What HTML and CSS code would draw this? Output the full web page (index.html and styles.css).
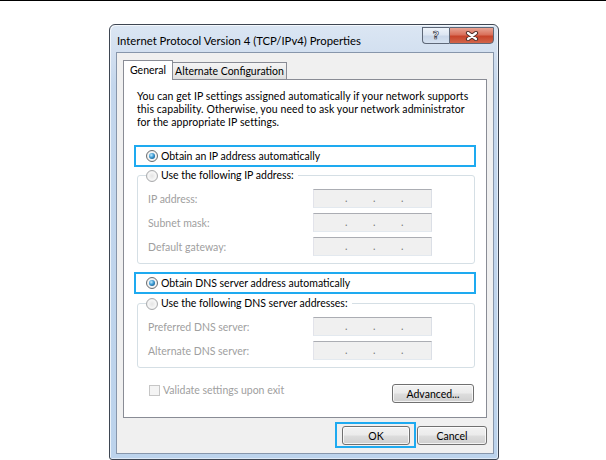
FILE: index.html
```html
<!DOCTYPE html>
<html>
<head>
<meta charset="utf-8">
<link rel="stylesheet" href="styles.css">
</head>
<body>
<div class="topline"></div>
<div class="window">
  <div class="titlebar">
    <div class="title">Internet Protocol Version 4 (TCP/IPv4) Properties</div>
    <div class="caption-btns">
      <div class="cbtn help">?</div>
      <div class="cbtn close">
        <svg width="14" height="10" viewBox="0 0 14 10">
          <path d="M3 2 L11 8 M11 2 L3 8" stroke="#51302a" stroke-width="4.2" stroke-linecap="round" fill="none"/>
          <path d="M3 2 L11 8 M11 2 L3 8" stroke="#ffffff" stroke-width="2.2" stroke-linecap="round" fill="none"/>
        </svg>
      </div>
    </div>
  </div>
  <div class="client">
    <div class="tabs">
      <div class="tab active">General</div>
      <div class="tab alt">Alternate Configuration</div>
    </div>
    <div class="panel">
      <p class="intro">You can get IP settings assigned automatically if your network supports<br>this capability. Otherwise, you need to ask your network administrator<br>for the appropriate IP settings.</p>
      <div class="hl option first"><span class="radio on"></span><span>Obtain an IP address automatically</span></div>
      <fieldset class="group g1">
        <legend><span class="radio"></span><span>Use the following IP address:</span></legend>
        <div class="rows">
          <span class="lbl">IP address:</span><span class="ip"><i>.</i><i>.</i><i>.</i></span>
          <span class="lbl">Subnet mask:</span><span class="ip"><i>.</i><i>.</i><i>.</i></span>
          <span class="lbl">Default gateway:</span><span class="ip"><i>.</i><i>.</i><i>.</i></span>
        </div>
      </fieldset>
      <div class="hl option second"><span class="radio on"></span><span>Obtain DNS server address automatically</span></div>
      <fieldset class="group g2">
        <legend><span class="radio"></span><span>Use the following DNS server addresses:</span></legend>
        <div class="rows">
          <span class="lbl">Preferred DNS server:</span><span class="ip"><i>.</i><i>.</i><i>.</i></span>
          <span class="lbl">Alternate DNS server:</span><span class="ip"><i>.</i><i>.</i><i>.</i></span>
        </div>
      </fieldset>
      <div class="foot">
        <div class="check"><span class="box"></span><span>Validate settings upon exit</span></div>
        <div class="btn adv">Advanced...</div>
      </div>
    </div>
    <div class="actions">
      <div class="hl okwrap"><div class="btn ok">OK</div></div>
      <div class="btn cancel">Cancel</div>
    </div>
  </div>
</div>
</body>
</html>
```

FILE: styles.css
```css
html, body {
  margin: 0;
  padding: 0;
  background: #ffffff;
}

body {
  font-family: Lato, "Open Sans", sans-serif;
  font-size: 10.5px;
  color: #000000;
}

.topline {
  height: 1px;
  background: #000000;
}

.window {
  margin: 23px 0 0 109px;
  width: 390px;
  height: 436px;
  box-sizing: border-box;
  border: 1px solid #3e4652;
  border-radius: 6px 6px 3px 3px;
  background: linear-gradient(180deg, #dbe6f3 0px, #d3e0f0 26px, #c4d7ed 60px, #bcd3ec 100%);
  box-shadow: inset 1px 1px 0 rgba(255, 255, 255, 0.7), inset -1px -1px 0 rgba(255, 255, 255, 0.5);
  display: flex;
  flex-direction: column;
}

.titlebar {
  flex: none;
  height: 27px;
  display: flex;
  justify-content: space-between;
  align-items: flex-start;
}

.title {
  padding: 9px 0 0 7px;
  line-height: 13px;
  font-size: 11.3px;
  color: #000000;
}

.caption-btns {
  display: flex;
  margin: 2px 4px 0 0;
  height: 17px;
}

.cbtn {
  box-sizing: border-box;
  height: 17px;
  display: flex;
  align-items: center;
  justify-content: center;
  border: 1px solid #5e6878;
}

.help {
  width: 27px;
  border-right: none;
  border-radius: 0 0 0 4px;
  background: linear-gradient(180deg, #eef3fa 0%, #dde6f2 45%, #c9d6e8 55%, #d6e2f1 100%);
  font-family: "DejaVu Sans", sans-serif;
  font-weight: bold;
  font-size: 11px;
  color: #ffffff;
  -webkit-text-stroke: 0.7px #3b4350;
  line-height: 1;
}

.close {
  width: 45px;
  border-radius: 0 0 4px 0;
  background: linear-gradient(180deg, #e8a393 0%, #d9705b 45%, #c7432a 55%, #d2654a 100%);
}

.client {
  flex: 1;
  min-height: 0;
  margin: 0 4px 5px 6px;
  border: 1px solid #8796ab;
  background: #f0f0f0;
  padding: 7px 6px 5px 6px;
  display: flex;
  flex-direction: column;
}

.tabs {
  flex: none;
  height: 20px;
  margin-bottom: -1px;
  display: flex;
  align-items: flex-end;
  position: relative;
  z-index: 1;
}

.tab {
  box-sizing: border-box;
  border: 1px solid #898c95;
  border-bottom: none;
  text-align: center;
  white-space: nowrap;
}

.tab.active {
  width: 50px;
  height: 20px;
  line-height: 19px;
  background: #ffffff;
}

.tab.alt {
  width: 114px;
  height: 17px;
  line-height: 16px;
  margin-bottom: 1px;
  border-left: none;
  background: linear-gradient(180deg, #f4f4f4 0%, #ebebeb 50%, #dedede 100%);
}

.panel {
  flex: 1;
  min-height: 0;
  background: #ffffff;
  border: 1px solid #898c95;
  padding: 10px 10px 0 10px;
  display: flex;
  flex-direction: column;
}

.intro {
  margin: 0 0 0 3px;
  line-height: 13px;
  letter-spacing: 0.08px;
}

.hl {
  border: 2px solid #1eaaf0;
}

.option {
  box-sizing: border-box;
  height: 22px;
  display: flex;
  align-items: center;
  gap: 3px;
  padding-left: 10px;
}

.option.first {
  margin-top: 16px;
}

.option.second {
  margin-top: 8px;
}

.radio {
  flex: none;
  position: relative;
  box-sizing: border-box;
  width: 12px;
  height: 12px;
  border-radius: 50%;
  border: 1px solid #a9abad;
  background: radial-gradient(circle at 50% 50%, #e4e4e4 0%, #f6f6f6 55%, #d9d9d9 100%);
}

.radio.on {
  border-color: #6a6d70;
}

.radio.on::after {
  content: "";
  position: absolute;
  left: 2px;
  top: 2px;
  width: 6px;
  height: 6px;
  border-radius: 50%;
  background: radial-gradient(circle at 38% 35%, #c2ecff 0%, #3d9ad3 45%, #0c4a78 95%);
}

.group {
  border: 1px solid #d5dfe5;
  border-radius: 3px;
  padding: 7px 10px 7px 10px;
  min-width: 0;
}

.group.g1 {
  margin: 2px 1px 0 3px;
}

.group.g2 {
  margin: 3px 1px 0 3px;
}

.group legend {
  display: flex;
  align-items: center;
  gap: 3px;
  height: 13px;
  line-height: 13px;
  padding: 0 4px 0 0;
  margin-left: -2px;
}

.rows {
  display: grid;
  grid-template-columns: 165px 119px;
  row-gap: 5px;
  align-items: center;
}

.lbl {
  color: #a0a0a0;
  white-space: nowrap;
}

.ip {
  box-sizing: border-box;
  height: 19px;
  border: 1px solid;
  border-color: #abadb3 #dbdfe6 #e3e9ef #e2e3ea;
  background: #f0f0f0;
  display: flex;
  padding-left: 31px;
  gap: 26px;
  line-height: 16px;
  color: #7a7a7a;
}

.ip i {
  font-style: normal;
  width: 2px;
}

.foot {
  margin-top: 16px;
  display: flex;
  justify-content: space-between;
  align-items: flex-start;
}

.check {
  margin: 1px 0 0 15px;
  display: flex;
  align-items: center;
  gap: 3px;
  color: #a0a0a0;
  line-height: 11px;
}

.check .box {
  box-sizing: border-box;
  width: 11px;
  height: 11px;
  border: 1px solid #c6c6c6;
  background: #f4f4f4;
}

.btn {
  box-sizing: border-box;
  height: 19px;
  border: 1px solid #707070;
  border-radius: 3px;
  background: linear-gradient(180deg, #f2f2f2 0%, #ebebeb 48%, #dddddd 52%, #cfcfcf 100%);
  box-shadow: inset 0 0 0 1px rgba(255, 255, 255, 0.75);
  display: flex;
  align-items: center;
  justify-content: center;
}

.adv {
  width: 82px;
  margin-right: 2px;
}

.actions {
  flex: none;
  margin-top: 4px;
  height: 26px;
  display: flex;
  justify-content: flex-end;
  align-items: flex-start;
}

.okwrap {
  padding: 2px 4px 1px 5px;
}

.ok {
  width: 68px;
}

.cancel {
  width: 70px;
  margin: 4px 0 0 1px;
}
```
